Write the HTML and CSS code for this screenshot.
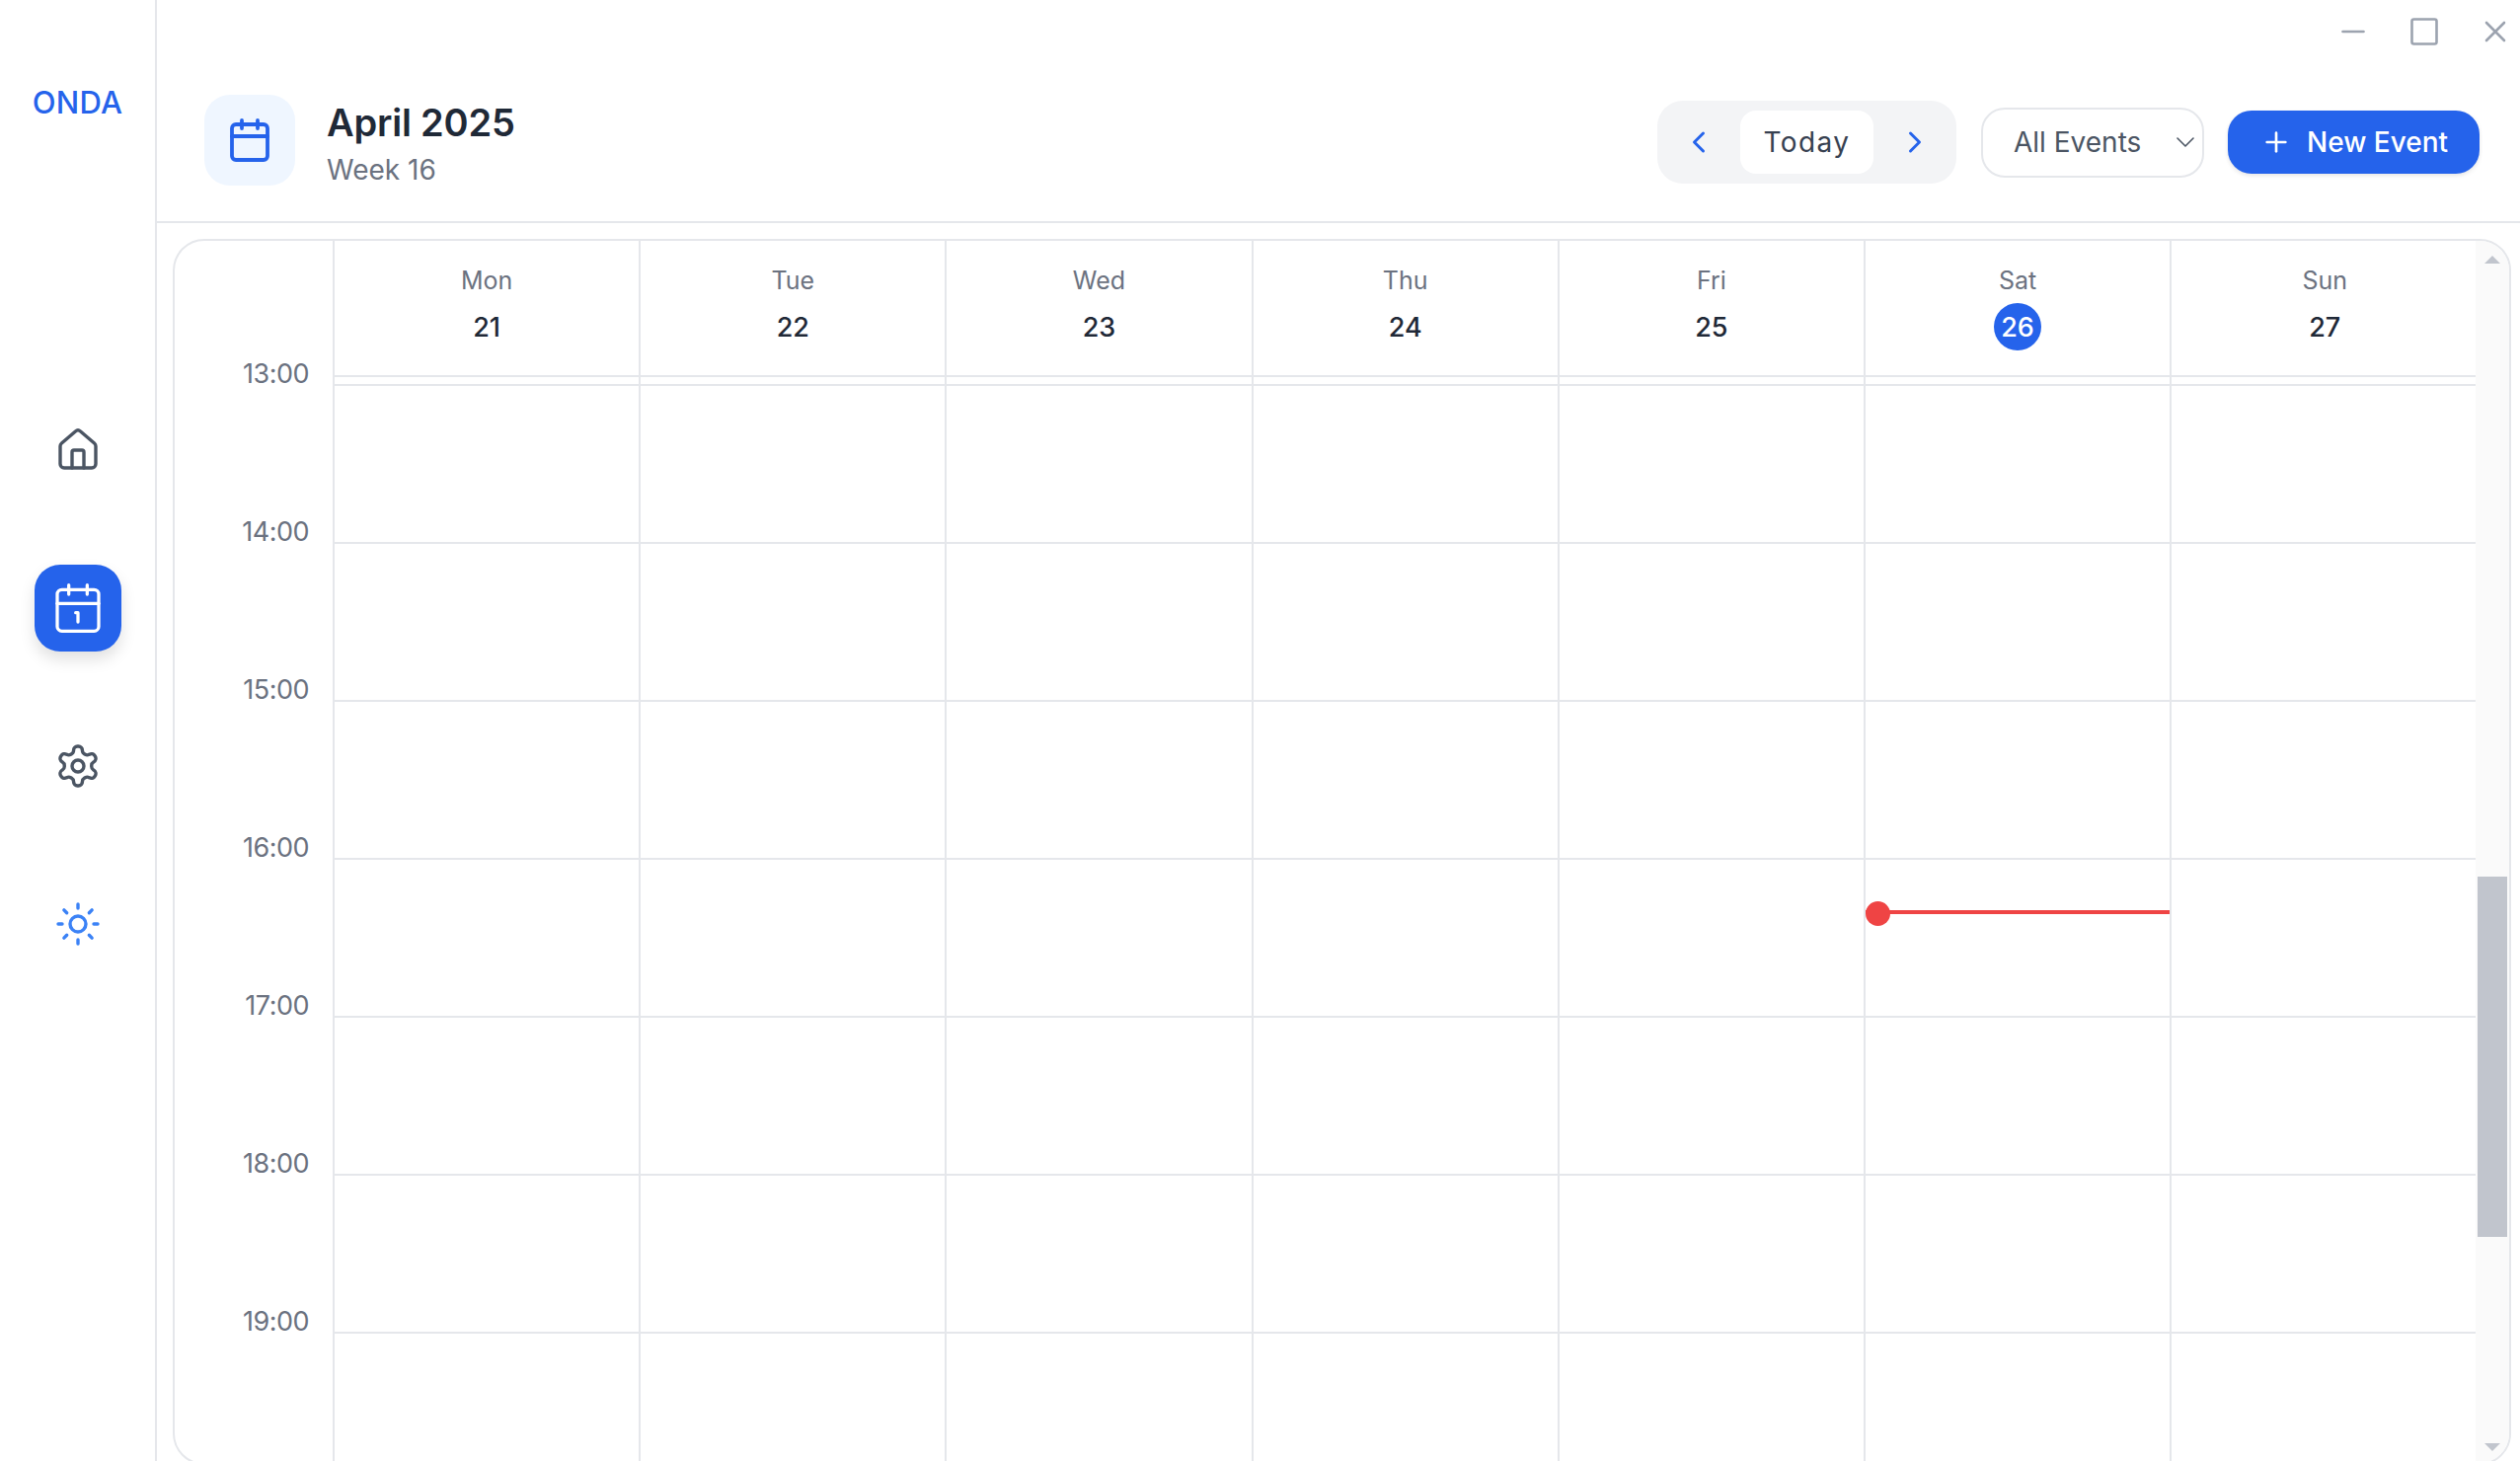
FILE: index.html
```html
<!DOCTYPE html>
<html lang="en">
<head>
    <meta charset="UTF-8">
    <meta name="viewport" content="width=device-width, initial-scale=1.0">
    <title>ONDA - Calendar</title>
    <link rel="stylesheet" href="styles.css">
</head>
<body>
    <aside class="sidebar">
        <div class="logo">ONDA</div>
        <nav class="side-nav">
            <a href="#" class="side-link">
                <svg class="icon-48" viewBox="0 0 24 24"><path d="M15 21v-8a1 1 0 0 0-1-1h-4a1 1 0 0 0-1 1v8"/><path d="M3 10a2 2 0 0 1 .709-1.528l7-5.999a2 2 0 0 1 2.582 0l7 5.999A2 2 0 0 1 21 10v9a2 2 0 0 1-2 2H5a2 2 0 0 1-2-2z"/></svg>
            </a>
            <a href="#" class="side-link active">
                <svg class="icon-56" viewBox="0 0 24 24"><path d="M11 14h1v4"/><path d="M16 2v4"/><path d="M3 10h18"/><path d="M8 2v4"/><rect x="3" y="4" width="18" height="18" rx="2"/></svg>
            </a>
            <a href="#" class="side-link">
                <svg class="icon-48" viewBox="0 0 24 24"><path d="M12.22 2h-.44a2 2 0 0 0-2 2v.18a2 2 0 0 1-1 1.73l-.43.25a2 2 0 0 1-2 0l-.15-.08a2 2 0 0 0-2.73.73l-.22.38a2 2 0 0 0 .73 2.73l.15.1a2 2 0 0 1 1 1.72v.51a2 2 0 0 1-1 1.74l-.15.09a2 2 0 0 0-.73 2.73l.22.38a2 2 0 0 0 2.73.73l.15-.08a2 2 0 0 1 2 0l.43.25a2 2 0 0 1 1 1.73V20a2 2 0 0 0 2 2h.44a2 2 0 0 0 2-2v-.18a2 2 0 0 1 1-1.73l.43-.25a2 2 0 0 1 2 0l.15.08a2 2 0 0 0 2.73-.73l.22-.39a2 2 0 0 0-.73-2.73l-.15-.08a2 2 0 0 1-1-1.74v-.5a2 2 0 0 1 1-1.74l.15-.09a2 2 0 0 0 .73-2.73l-.22-.38a2 2 0 0 0-2.73-.73l-.15.08a2 2 0 0 1-2 0l-.43-.25a2 2 0 0 1-1-1.73V4a2 2 0 0 0-2-2z"/><circle cx="12" cy="12" r="3"/></svg>
            </a>
            <a href="#" class="side-link theme">
                <svg class="icon-48" viewBox="0 0 24 24"><circle cx="12" cy="12" r="4"/><path d="M12 2v2"/><path d="M12 20v2"/><path d="m4.93 4.93 1.41 1.41"/><path d="m17.66 17.66 1.41 1.41"/><path d="M2 12h2"/><path d="M20 12h2"/><path d="m6.34 17.66-1.41 1.41"/><path d="m19.07 4.93-1.41 1.41"/></svg>
            </a>
        </nav>
    </aside>

    <main class="main">
        <div class="titlebar">
            <svg class="win-icon" viewBox="0 0 28 28"><path d="M3.5 14h21"/></svg>
            <svg class="win-icon" viewBox="0 0 28 28"><rect x="1.5" y="1.5" width="25" height="25" rx="2"/></svg>
            <svg class="win-icon" viewBox="0 0 28 28"><path d="M5 5l18 18M23 5L5 23"/></svg>
        </div>

        <header class="header">
            <div class="header-left">
                <div class="header-icon">
                    <svg class="icon-48" viewBox="0 0 24 24"><path d="M8 2v4"/><path d="M16 2v4"/><rect x="3" y="4" width="18" height="18" rx="2"/><path d="M3 10h18"/></svg>
                </div>
                <div class="header-text">
                    <h1 class="month">April 2025</h1>
                    <div class="week-no">Week 16</div>
                </div>
            </div>
            <div class="header-right">
                <div class="nav-group">
                    <button class="arrow-btn"><svg class="icon-36" viewBox="0 0 24 24"><path d="m15 18-6-6 6-6"/></svg></button>
                    <button class="today-btn">Today</button>
                    <button class="arrow-btn"><svg class="icon-36" viewBox="0 0 24 24"><path d="m9 18 6-6-6-6"/></svg></button>
                </div>
                <div class="filter">
                    <span>All Events</span>
                    <svg class="filter-arrow" viewBox="0 0 18 10"><path d="M1 1l8 8 8-8"/></svg>
                </div>
                <button class="new-btn">
                    <svg class="icon-32" viewBox="0 0 24 24"><path d="M5 12h14"/><path d="M12 5v14"/></svg>
                    New Event
                </button>
            </div>
        </header>

        <div class="content">
            <div class="calendar">
                <div class="cal-scroll">
                    <div class="days">
                        <div class="day-head blank"></div>
                        <div class="day-head"><span class="day-name">Mon</span><span class="day-num">21</span></div>
                        <div class="day-head"><span class="day-name">Tue</span><span class="day-num">22</span></div>
                        <div class="day-head"><span class="day-name">Wed</span><span class="day-num">23</span></div>
                        <div class="day-head"><span class="day-name">Thu</span><span class="day-num">24</span></div>
                        <div class="day-head"><span class="day-name">Fri</span><span class="day-num">25</span></div>
                        <div class="day-head"><span class="day-name">Sat</span><span class="day-num today">26</span></div>
                        <div class="day-head"><span class="day-name">Sun</span><span class="day-num">27</span></div>
                    </div>
                    <div class="hours">
                        <div class="time">13:00</div><div class="slot"></div><div class="slot"></div><div class="slot"></div><div class="slot"></div><div class="slot"></div><div class="slot"></div><div class="slot"></div>
                        <div class="time">14:00</div><div class="slot"></div><div class="slot"></div><div class="slot"></div><div class="slot"></div><div class="slot"></div><div class="slot"></div><div class="slot"></div>
                        <div class="time">15:00</div><div class="slot"></div><div class="slot"></div><div class="slot"></div><div class="slot"></div><div class="slot"></div><div class="slot"></div><div class="slot"></div>
                        <div class="time">16:00</div><div class="slot"></div><div class="slot"></div><div class="slot"></div><div class="slot"></div><div class="slot"></div><div class="slot"></div><div class="slot"></div>
                        <div class="time">17:00</div><div class="slot"></div><div class="slot"></div><div class="slot"></div><div class="slot"></div><div class="slot"></div>
                        <div class="slot now-slot"><div class="now-line"></div><div class="now-dot"></div></div>
                        <div class="slot"></div>
                        <div class="time">18:00</div><div class="slot"></div><div class="slot"></div><div class="slot"></div><div class="slot"></div><div class="slot"></div><div class="slot"></div><div class="slot"></div>
                        <div class="time">19:00</div><div class="slot"></div><div class="slot"></div><div class="slot"></div><div class="slot"></div><div class="slot"></div><div class="slot"></div><div class="slot"></div>
                        <div class="time"></div><div class="slot"></div><div class="slot"></div><div class="slot"></div><div class="slot"></div><div class="slot"></div><div class="slot"></div><div class="slot"></div>
                    </div>
                </div>
                <div class="scrollbar">
                    <div class="scroll-up"></div>
                    <div class="scroll-thumb"></div>
                    <div class="scroll-down"></div>
                </div>
            </div>
        </div>
    </main>
</body>
</html>
```

FILE: styles.css
```css
* {
    box-sizing: border-box;
}
body {
    font-family: Inter, "Noto Sans", Arial, sans-serif;
    margin: 0;
    padding: 0;
    height: 100vh;
    overflow: hidden;
    display: flex;
    background-color: white;
}
button {
    font-family: inherit;
    border: none;
    cursor: pointer;
}
svg {
    display: block;
    fill: none;
    stroke: currentColor;
    stroke-linecap: round;
    stroke-linejoin: round;
}
.icon-32 {
    width: 32px;
    height: 32px;
    stroke-width: 2;
}
.icon-36 {
    width: 36px;
    height: 36px;
    stroke-width: 2;
}
.icon-48 {
    width: 48px;
    height: 48px;
    stroke-width: 1.7;
}
.icon-56 {
    width: 56px;
    height: 56px;
    stroke-width: 1.4;
}

/* sidebar */
.sidebar {
    width: 159px;
    flex: none;
    border-right: 2px solid #e5e7eb;
    padding-top: 84px;
    display: flex;
    flex-direction: column;
    align-items: center;
}
.logo {
    font-size: 31px;
    line-height: 40px;
    font-weight: 500;
    letter-spacing: 0.3px;
    color: #2563eb;
}
.side-nav {
    margin-top: 288px;
    display: flex;
    flex-direction: column;
    gap: 72px;
}
.side-link {
    width: 88px;
    height: 88px;
    display: flex;
    align-items: center;
    justify-content: center;
    border-radius: 26px;
    color: #4b5563;
}
.side-link.active {
    background-color: #2563eb;
    color: white;
    box-shadow: 0 8px 16px rgba(0, 0, 0, 0.12);
}
.side-link.theme {
    color: #3b82f6;
}

/* top */
.main {
    flex: 1;
    min-width: 0;
    display: flex;
    flex-direction: column;
}
.titlebar {
    height: 64px;
    flex: none;
    display: flex;
    justify-content: flex-end;
    align-items: center;
    gap: 44px;
    padding-right: 11px;
}
.win-icon {
    width: 28px;
    height: 28px;
    color: #9ca3af;
    stroke-width: 2.6;
}
.header {
    height: 162px;
    flex: none;
    border-bottom: 2px solid #e5e7eb;
    padding: 0 41px 0 48px;
    display: flex;
    justify-content: space-between;
    align-items: center;
}
.header-left {
    display: flex;
    align-items: center;
    gap: 32px;
    margin-bottom: 4px;
}
.header-icon {
    width: 92px;
    height: 92px;
    border-radius: 26px;
    background-color: #eff6ff;
    color: #2563eb;
    display: flex;
    align-items: center;
    justify-content: center;
}
.header-icon svg {
    stroke-width: 1.9;
}
.header-text {
    padding-top: 4px;
}
.month {
    margin: 0;
    font-size: 38px;
    line-height: 50px;
    font-weight: 600;
    letter-spacing: -0.2px;
    color: #1f2937;
}
.week-no {
    margin-top: 5px;
    font-size: 28px;
    line-height: 36px;
    color: #6b7280;
}
.header-right {
    display: flex;
    align-items: center;
    gap: 24px;
}
.nav-group {
    width: 303px;
    height: 84px;
    margin-right: 1px;
    border-radius: 26px;
    background-color: #f3f4f6;
    display: flex;
    align-items: center;
    justify-content: center;
}
.arrow-btn {
    width: 84px;
    height: 64px;
    padding: 0;
    background: none;
    color: #2563eb;
    display: flex;
    align-items: center;
    justify-content: center;
}
.today-btn {
    width: 135px;
    height: 64px;
    padding: 0;
    border-radius: 16px;
    background-color: white;
    color: #374151;
    font-size: 28px;
    letter-spacing: 1.4px;
}
.filter {
    width: 226px;
    height: 71px;
    border: 2px solid #e5e7eb;
    border-radius: 24px;
    padding-left: 31px;
    padding-right: 8px;
    display: flex;
    align-items: center;
    justify-content: space-between;
    font-size: 28px;
    color: #4b5563;
}
.filter-arrow {
    width: 18px;
    height: 10px;
    stroke-width: 1.6;
    color: #4b5563;
}
.new-btn {
    width: 255px;
    height: 64px;
    padding: 0 0 0 33px;
    border-radius: 24px;
    background-color: #2563eb;
    color: white;
    font-size: 28px;
    font-weight: 500;
    display: flex;
    align-items: center;
    gap: 15px;
    box-shadow: 0 2px 4px rgba(0, 0, 0, 0.1);
}

/* calendar */
.content {
    padding: 16px 9px 0 16px;
}
.calendar {
    height: 1242px;
    border: 2px solid #e5e7eb;
    border-radius: 32px;
    overflow: hidden;
    display: flex;
}
.cal-scroll {
    width: 2331px;
    flex: none;
    overflow: hidden;
}
.days,
.hours {
    display: grid;
    grid-template-columns: 162px repeat(7, 310.2px);
}
.hours {
    grid-template-rows: 9px repeat(7, 160px);
}
.day-head {
    height: 138px;
    border-right: 2px solid #e5e7eb;
    border-bottom: 2px solid #e5e7eb;
    padding-top: 24px;
    display: flex;
    flex-direction: column;
    align-items: center;
}
.day-head:last-child {
    border-right: none;
}
.day-head.blank {
    border-bottom: none;
}
.day-name {
    font-size: 25px;
    line-height: 32px;
    color: #6b7280;
}
.day-num {
    width: 48px;
    height: 48px;
    margin-top: 7px;
    border-radius: 50%;
    display: flex;
    align-items: center;
    justify-content: center;
    font-size: 27px;
    font-weight: 500;
    color: #1f2937;
}
.day-num.today {
    background-color: #2563eb;
    color: white;
}
.time {
    border-right: 2px solid #e5e7eb;
    padding-right: 24px;
    display: flex;
    align-items: flex-end;
    justify-content: flex-end;
    font-size: 27px;
    line-height: 24px;
    letter-spacing: -0.5px;
    color: #6b7280;
}
.slot {
    border-right: 2px solid #e5e7eb;
    border-bottom: 2px solid #e5e7eb;
}
.slot:nth-child(8n) {
    border-right: none;
}
.now-slot {
    position: relative;
}
.now-line {
    position: absolute;
    left: 0;
    right: 0;
    top: 51px;
    height: 4px;
    background-color: #ef4444;
}
.now-dot {
    position: absolute;
    left: 0;
    top: 42px;
    width: 25px;
    height: 25px;
    border-radius: 50%;
    background-color: #ef4444;
}

.scrollbar {
    flex: 1;
    background-color: #fafafa;
    padding-top: 15px;
    display: flex;
    flex-direction: column;
    align-items: center;
}
.scroll-up,
.scroll-down {
    width: 0;
    height: 0;
    border-left: 8px solid transparent;
    border-right: 8px solid transparent;
}
.scroll-up {
    border-bottom: 8px solid #c1c5cd;
}
.scroll-down {
    border-top: 8px solid #c1c5cd;
    margin-top: 209px;
}
.scroll-thumb {
    width: 30px;
    height: 365px;
    margin-top: 621px;
    background-color: #c1c5cd;
}
```
